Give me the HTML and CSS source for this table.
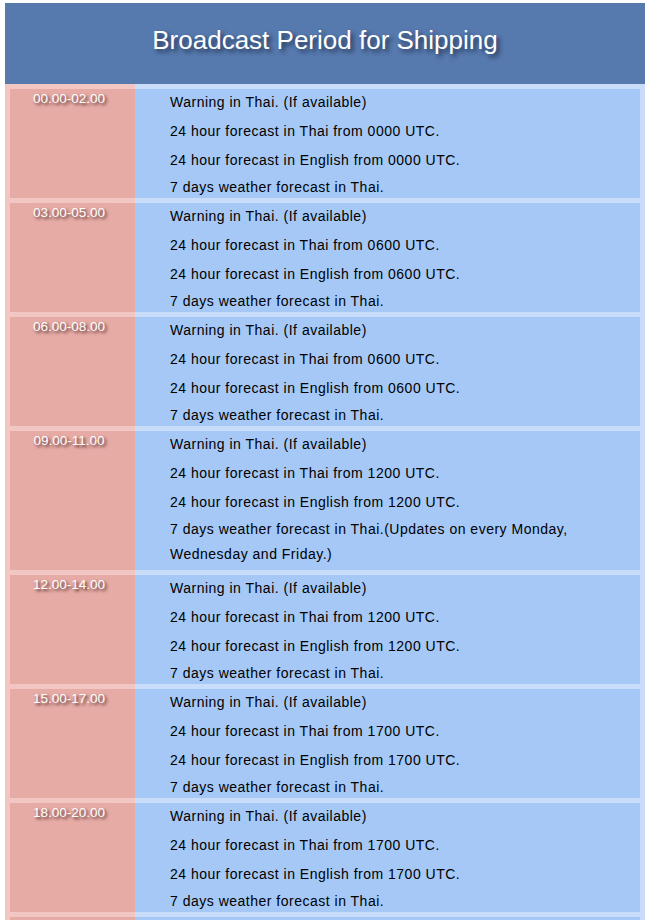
FILE: index.html
```html
<!DOCTYPE html>
<html>
<head>
<meta charset="utf-8">
<title>Broadcast Period for Shipping</title>
<link rel="stylesheet" href="styles.css">
</head>
<body>
<div class="page">
  <div class="header"><h1 class="title">Broadcast Period for Shipping</h1></div>
  <div class="schedule">
    <div class="row">
      <div class="time">00.00-02.00</div>
      <div class="desc">
        <div class="line">Warning in Thai. (If available)</div>
        <div class="line">24 hour forecast in Thai from 0000 UTC.</div>
        <div class="line">24 hour forecast in English from 0000 UTC.</div>
        <div class="line">7 days weather forecast in Thai.</div>
      </div>
    </div>
    <div class="row">
      <div class="time">03.00-05.00</div>
      <div class="desc">
        <div class="line">Warning in Thai. (If available)</div>
        <div class="line">24 hour forecast in Thai from 0600 UTC.</div>
        <div class="line">24 hour forecast in English from 0600 UTC.</div>
        <div class="line">7 days weather forecast in Thai.</div>
      </div>
    </div>
    <div class="row">
      <div class="time">06.00-08.00</div>
      <div class="desc">
        <div class="line">Warning in Thai. (If available)</div>
        <div class="line">24 hour forecast in Thai from 0600 UTC.</div>
        <div class="line">24 hour forecast in English from 0600 UTC.</div>
        <div class="line">7 days weather forecast in Thai.</div>
      </div>
    </div>
    <div class="row">
      <div class="time">09.00-11.00</div>
      <div class="desc desc-long">
        <div class="line">Warning in Thai. (If available)</div>
        <div class="line">24 hour forecast in Thai from 1200 UTC.</div>
        <div class="line">24 hour forecast in English from 1200 UTC.</div>
        <div class="line">7 days weather forecast in Thai.(Updates on every Monday, Wednesday and Friday.)</div>
      </div>
    </div>
    <div class="row">
      <div class="time">12.00-14.00</div>
      <div class="desc">
        <div class="line">Warning in Thai. (If available)</div>
        <div class="line">24 hour forecast in Thai from 1200 UTC.</div>
        <div class="line">24 hour forecast in English from 1200 UTC.</div>
        <div class="line">7 days weather forecast in Thai.</div>
      </div>
    </div>
    <div class="row">
      <div class="time">15.00-17.00</div>
      <div class="desc">
        <div class="line">Warning in Thai. (If available)</div>
        <div class="line">24 hour forecast in Thai from 1700 UTC.</div>
        <div class="line">24 hour forecast in English from 1700 UTC.</div>
        <div class="line">7 days weather forecast in Thai.</div>
      </div>
    </div>
    <div class="row">
      <div class="time">18.00-20.00</div>
      <div class="desc">
        <div class="line">Warning in Thai. (If available)</div>
        <div class="line">24 hour forecast in Thai from 1700 UTC.</div>
        <div class="line">24 hour forecast in English from 1700 UTC.</div>
        <div class="line">7 days weather forecast in Thai.</div>
      </div>
    </div>
    <div class="row">
      <div class="time">21.00-23.00</div>
      <div class="desc">
        <div class="line">Warning in Thai. (If available)</div>
        <div class="line">24 hour forecast in Thai from 1700 UTC.</div>
        <div class="line">24 hour forecast in English from 1700 UTC.</div>
        <div class="line">7 days weather forecast in Thai.</div>
      </div>
    </div>
  </div>
</div>
</body>
</html>
```

FILE: styles.css
```css
html, body {
  margin: 0;
  padding: 0;
  background: #ffffff;
}

.page {
  width: 640px;
  padding: 3px 0 0 5px;
  font-family: "Liberation Sans", Arial, sans-serif;
}

.header {
  height: 81px;
  background: #5679ae;
  display: flex;
  align-items: center;
  justify-content: center;
}

.title {
  margin: 0 0 6px 0;
  font-size: 26px;
  font-weight: normal;
  color: #ffffff;
  text-shadow: 3px 3px 4px rgba(20, 30, 50, 0.75);
}

.schedule {
  display: flex;
  flex-direction: column;
}

.row {
  display: grid;
  grid-template-columns: 130px 1fr;
}

.time {
  background: #e6aba5;
  border-left: 5px solid #f2c7c3;
  border-top: 5px solid #f2c7c3;
  padding: 1px 7px 0 0;
  line-height: 18px;
  font-size: 13.5px;
  color: #ffffff;
  text-align: center;
  text-shadow: 2px 2px 3px rgba(60, 20, 20, 0.9);
}

.desc {
  background: #a5c8f7;
  border-top: 5px solid #c9ddfa;
  border-right: 5px solid #c9ddfa;
  padding: 0 0 0 35px;
  display: flex;
  flex-direction: column;
  gap: 5px;
  font-size: 14px;
  letter-spacing: 0.5px;
  color: #000000;
}

.line {
  line-height: 24px;
  padding-top: 1px;
  margin-bottom: -1px;
}

.line:last-child {
  margin-top: -2px;
}

.desc-long {
  padding-right: 60px;
}

.desc-long .line:last-child {
  line-height: 25px;
  margin-bottom: 3px;
}
```
